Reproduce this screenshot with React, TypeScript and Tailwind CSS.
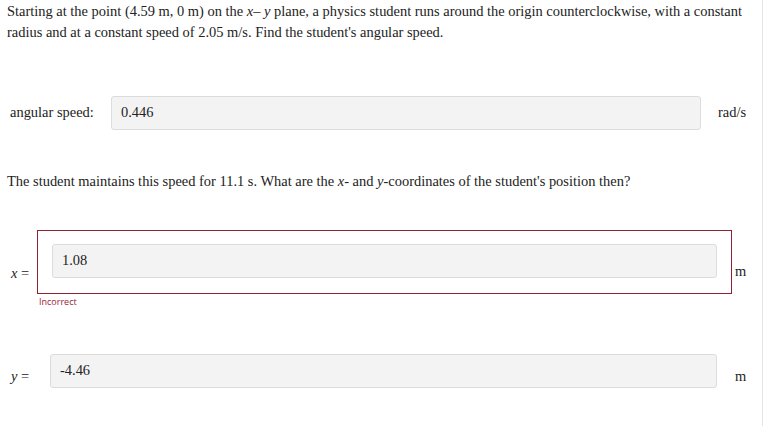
export default function App() {
  return (
    <div className="min-h-[426px] w-[763px] border-r border-[#e3e3e3] bg-white text-[14.45px] text-[#222] [font-family:'Liberation_Serif',serif]">
      {/* Question part 1 */}
      <p className="px-[7px] pt-[1px] leading-[21px]">
        Starting at the point (4.59 m, 0 m) on the <i>x</i>– <i>y</i> plane, a physics student runs around the origin
        counterclockwise, with a constant radius and at a constant speed of 2.05 m/s. Find the student's angular speed.
      </p>

      <div className="mt-[53px] flex items-center">
        <span className="w-[111px] pl-[10px]">angular speed:</span>
        <div className="flex h-[34px] w-[590px] items-center rounded-[3px] border border-[#dcdcdc] bg-[#f3f3f3] pl-[9px]">
          0.446
        </div>
        <span className="ml-[17px]">rad/s</span>
      </div>

      {/* Question part 2 */}
      <p className="mt-[41px] px-[7px] leading-[21px]">
        The student maintains this speed for 11.1 s. What are the <i>x</i>- and <i>y</i>-coordinates of the student's
        position then?
      </p>

      <div className="mt-[38px] flex items-start">
        <span className="w-[37px] pl-[11px] pt-[33px]">
          <i>x</i> =
        </span>
        <div className="flex h-[64px] w-[695px] items-start border border-[#8e2134] px-[14px] pt-[13px]">
          <div className="flex h-[34px] w-full items-center rounded-[3px] border border-[#dcdcdc] bg-[#f3f3f3] pl-[9px]">
            1.08
          </div>
        </div>
        <span className="ml-[3px] pt-[31px]">m</span>
      </div>
      <div className="ml-[39px] mt-px text-[9px] text-[#9b2335] [font-family:'Open_Sans',sans-serif]">Incorrect</div>

      <div className="mt-[45px] flex items-start">
        <span className="w-[50px] pl-[11px] pt-[12px] leading-[21px]">
          <i>y</i> =
        </span>
        <div className="flex h-[34px] w-[667px] items-center rounded-[3px] border border-[#dcdcdc] bg-[#f3f3f3] pl-[9px]">
          -4.46
        </div>
        <span className="ml-[18px] pt-[12px] leading-[21px]">m</span>
      </div>
    </div>
  )
}
